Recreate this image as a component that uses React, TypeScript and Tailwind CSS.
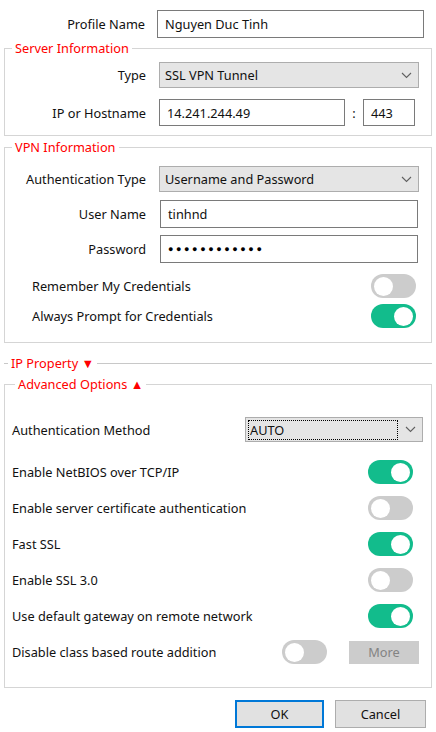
import { ReactNode } from "react";

const font = { fontFamily: '"Noto Sans", "Open Sans", sans-serif' };

function Chevron() {
  return (
    <svg width="11" height="7" viewBox="0 0 11 7" className="shrink-0">
      <polyline points="1,1 5.5,5.5 10,1" fill="none" stroke="#606060" strokeWidth="1.1" />
    </svg>
  );
}

function Toggle({ on }: { on: boolean }) {
  return (
    <div
      className={`flex h-[24px] w-[45px] shrink-0 items-center rounded-full px-[3px] ${
        on ? "justify-end bg-[#12bc8c]" : "justify-start bg-[#cccccc]"
      }`}
    >
      <div className="h-[19px] w-[19px] rounded-full bg-white" />
    </div>
  );
}

function Legend({ children, className = "" }: { children: ReactNode; className?: string }) {
  return (
    <legend className={`px-[3px] text-[12.75px] leading-[16px] text-[#ff0000] ${className}`}>
      {children}
    </legend>
  );
}

function Label({ children }: { children: ReactNode }) {
  return <div className="w-[142px] shrink-0 pr-[1px] text-right">{children}</div>;
}

function TextBox({ value, className = "" }: { value: ReactNode; className?: string }) {
  return (
    <div
      className={`flex h-[27px] items-center border border-[#7a7a7a] bg-white px-[7px] ${className}`}
    >
      {value}
    </div>
  );
}

function Combo({ value, className = "" }: { value: string; className?: string }) {
  return (
    <div
      className={`flex h-[26px] items-center justify-between border border-[#adadad] bg-[#e5e5e5] pl-[5px] pr-[6px] ${className}`}
    >
      <span>{value}</span>
      <Chevron />
    </div>
  );
}

function ToggleRow({ label, on, extra }: { label: string; on: boolean; extra?: ReactNode }) {
  return (
    <div className="flex h-[36px] items-center justify-between">
      <span>{label}</span>
      {extra ?? <Toggle on={on} />}
    </div>
  );
}

export default function App() {
  return (
    <div
      style={font}
      className="h-[732px] w-[436px] bg-white px-[4px] pt-[10px] text-[12.75px] leading-[18px] text-[#111]"
    >
      <div className="flex h-[28px] items-center">
        <Label>Profile Name</Label>
        <TextBox value="Nguyen Duc Tinh" className="ml-[11px] h-[28px] w-[267px]" />
      </div>

      <fieldset className="mt-[2px] border border-[#d5d5d5] pb-[9px] pt-[6px]">
        <Legend className="ml-[7px]">Server Information</Legend>
        <div className="flex items-center">
          <Label>Type</Label>
          <Combo value="SSL VPN Tunnel" className="ml-[12px] w-[260px]" />
        </div>
        <div className="mt-[11px] flex items-center">
          <Label>IP or Hostname</Label>
          <TextBox value="14.241.244.49" className="ml-[12px] h-[26px] w-[186px]" />
          <span className="w-[18px] text-center">:</span>
          <TextBox value="443" className="h-[26px] w-[52px] px-[5px]" />
        </div>
      </fieldset>

      <fieldset className="mt-[3px] border border-[#d5d5d5] pt-[11px]">
        <Legend className="ml-[7px]">VPN Information</Legend>
        <div className="flex items-center">
          <Label>Authentication Type</Label>
          <Combo value="Username and Password" className="ml-[12px] h-[24px] w-[260px]" />
        </div>
        <div className="mt-[8px] flex items-center">
          <Label>User Name</Label>
          <TextBox value="tinhnd" className="ml-[13px] h-[28px] w-[258px]" />
        </div>
        <div className="mt-[7px] flex items-center">
          <Label>Password</Label>
          <TextBox
            value={
              <span className="text-[9px] tracking-[2.6px] text-black">●●●●●●●●●●●●</span>
            }
            className="ml-[13px] h-[28px] w-[258px]"
          />
        </div>
        <div className="mt-[8px] pl-[27px] pr-[15px] pb-[11px]">
          <div className="flex h-[30px] items-center justify-between">
            <span>Remember My Credentials</span>
            <Toggle on={false} />
          </div>
          <div className="flex h-[30px] items-center justify-between">
            <span>Always Prompt for Credentials</span>
            <Toggle on />
          </div>
        </div>
      </fieldset>

      <fieldset className="mt-[12px] border-t border-[#c8c8c8]">
        <Legend className="ml-[4px]">IP Property ▼</Legend>
      </fieldset>

      <fieldset className="mt-[5px] border border-[#d5d5d5] pl-[7px] pr-[18px] pb-[17px] pt-[25px]">
        <Legend className="ml-[3px]">Advanced Options ▲</Legend>
        <div className="flex h-[25px] items-center justify-between">
          <span>Authentication Method</span>
          <div className="-mr-[10px] flex h-[25px] w-[178px] items-center justify-between border border-[#adadad] bg-[#e5e5e5] pl-[2px] pr-[6px]">
            <span className="flex h-[20px] w-[150px] items-center border border-dotted border-black pl-[1px]">
              AUTO
            </span>
            <Chevron />
          </div>
        </div>
        <div className="mt-[12px]">
          <ToggleRow label="Enable NetBIOS over TCP/IP" on />
          <ToggleRow label="Enable server certificate authentication" on={false} />
          <ToggleRow label="Fast SSL" on />
          <ToggleRow label="Enable SSL 3.0" on={false} />
          <ToggleRow label="Use default gateway on remote network" on />
          <ToggleRow
            label="Disable class based route addition"
            on={false}
            extra={
              <div className="-mr-[6px] flex items-center gap-[22px]">
                <Toggle on={false} />
                <div className="flex h-[23px] w-[70px] items-center justify-center bg-[#cccccc] text-[#838383]">
                  More
                </div>
              </div>
            }
          />
        </div>
      </fieldset>

      <div className="mt-[12px] flex justify-end gap-[11px] pr-[6px]">
        <button className="h-[28px] w-[89px] border-2 border-[#0078d7] bg-[#e1e1e1] text-[#111]">
          OK
        </button>
        <button className="h-[28px] w-[91px] border border-[#adadad] bg-[#e1e1e1] text-[#111]">
          Cancel
        </button>
      </div>
    </div>
  );
}
